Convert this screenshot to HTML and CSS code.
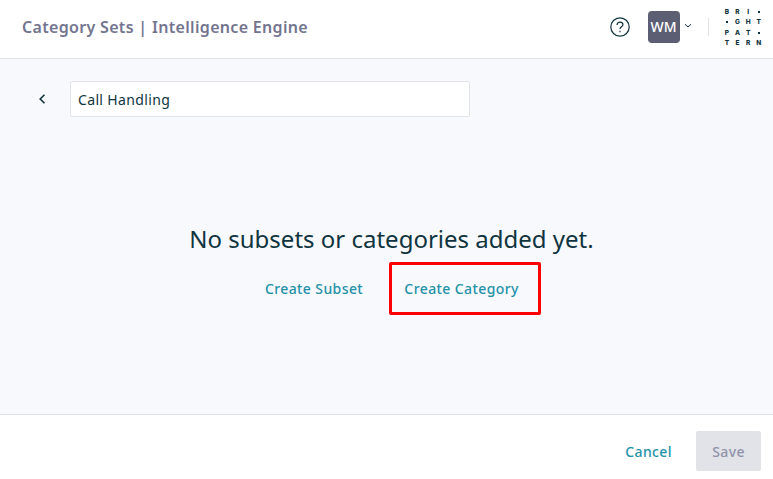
FILE: index.html
```
<!DOCTYPE html>
<html lang="en">
<head>
  <meta charset="UTF-8" />
  <meta name="viewport" content="width=device-width, initial-scale=1.0" />
  <title>Category Sets | Intelligence Engine</title>
  <link rel="stylesheet" href="styles.css">
</head>
<body>
  <header>
    <h1>Category Sets | Intelligence Engine</h1>
    <svg class="help" viewBox="0 0 20 20" width="20" height="20">
      <circle cx="10" cy="10" r="9.2" />
      <path d="M7.1 7.9c0-1.7 1.3-2.8 2.9-2.8s2.9 1 2.9 2.6c0 2.1-2.9 2.2-2.9 4.4" />
      <path d="M10 13.8v1.4" />
    </svg>
    <div class="avatar">WM</div>
    <svg class="arrow" viewBox="0 0 8 6" width="8" height="6">
      <path d="M1 1.3l3 2.6 3-2.6" />
    </svg>
    <div class="divider"></div>
    <div class="logo">
      <span>B</span><span>R</span><span>I</span><i></i>
      <i></i><span>G</span><span>H</span><span>T</span>
      <span>P</span><span>A</span><span>T</span><i></i>
      <span>T</span><span>E</span><span>R</span><span>N</span>
    </div>
  </header>

  <main>
    <div class="name-row">
      <button type="button" class="back" aria-label="Back">
        <svg viewBox="0 0 8 10" width="8" height="10">
          <path d="M6.5 .8L2.2 5l4.3 4.2" />
        </svg>
      </button>
      <input type="text" name="name" value="Call Handling" />
    </div>

    <section class="empty">
      <h2>No subsets or categories added yet.</h2>
      <div class="links">
        <button type="button" class="link">Create Subset</button>
        <button type="button" class="link marked">Create Category</button>
      </div>
    </section>
  </main>

  <footer>
    <button type="button" class="link">Cancel</button>
    <button type="button" class="save" disabled>Save</button>
  </footer>
</body>
</html>
```
FILE: styles.css
```
* {
  box-sizing: border-box;
}

body {
  margin: 0;
  height: 479px;
  display: flex;
  flex-direction: column;
  overflow: hidden;
  font-family: 'Noto Sans', sans-serif;
  font-size: 14px;
  letter-spacing: 0.35px;
  color: #0f3440;
  background: #fff;
}

header {
  display: flex;
  align-items: center;
  height: 59px;
  padding: 0 12px 5px 22px;
  border-bottom: 1px solid #e2e3e8;
}

h1 {
  margin: 0 auto 0 0;
  font-size: 16px;
  font-weight: 600;
  letter-spacing: 0.32px;
  color: #73758f;
}

svg {
  fill: none;
  stroke: #0f3440;
}

.help {
  margin-right: 18px;
  stroke-width: 1.2;
}

.avatar {
  width: 32px;
  height: 32px;
  border-radius: 4px;
  background: #5c5e73;
  color: #fff;
  font-weight: 550;
  line-height: 32px;
  text-align: center;
  letter-spacing: 0;
}

.arrow {
  margin: 0 16px 2px 4px;
}

.divider {
  width: 1px;
  height: 18px;
  margin-right: 13px;
  background: #e2e3e8;
}

.logo {
  display: grid;
  grid-template-columns: repeat(4, 10.6px);
  grid-template-rows: repeat(4, 10.4px);
  margin: 2px -3px 0 0;
  place-items: center;
  font: 800 6.5px/10px Inter, sans-serif;
  letter-spacing: 0;
}

.logo i {
  width: 2px;
  height: 2px;
  background: #0f3440;
}

main {
  flex: 1;
  padding: 22px 0 0 32px;
  background: #f8f9fd;
}

button {
  padding: 0;
  border: none;
  background: none;
  font: inherit;
  font-weight: 500;
  letter-spacing: 0.4px;
}

.name-row {
  display: flex;
  align-items: center;
}

.back {
  display: flex;
  justify-content: center;
  width: 20px;
  margin-right: 18px;
}

.back svg {
  stroke-width: 1.6;
}

input {
  width: 400px;
  height: 36px;
  padding: 0 7px;
  border: 1px solid #e2e3e8;
  border-radius: 2px;
  font: inherit;
  letter-spacing: inherit;
  color: inherit;
  background: #fff;
}

.empty {
  margin: 103px 0 0 -22px;
  text-align: center;
}

h2 {
  margin: 0;
  font-size: 24px;
  font-weight: 400;
  line-height: 38px;
  letter-spacing: 0;
}

.links {
  display: flex;
  justify-content: center;
  margin: 4px 0 0 23px;
}

.link {
  color: #2391a8;
}

.marked {
  width: 152px;
  height: 53px;
  margin-left: 26px;
  padding-right: 7px;
  border: 3px solid #f00;
  border-radius: 2px;
}

footer {
  display: flex;
  justify-content: flex-end;
  align-items: center;
  gap: 24px;
  height: 65px;
  padding: 8px 12px 0 0;
  border-top: 1px solid #e2e3e8;
}

.save {
  width: 65px;
  height: 40px;
  border-radius: 2px;
  background: #e2e3e8;
  color: #9092a8;
}
```
